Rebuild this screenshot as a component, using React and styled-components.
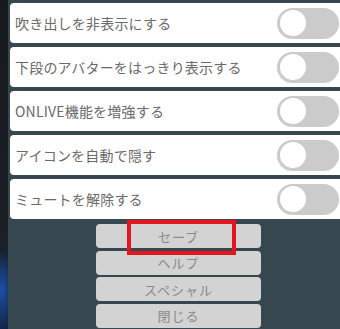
import React from 'react';
import styled, { createGlobalStyle } from 'styled-components';

const Global = createGlobalStyle`
  html, body {
    margin: 0;
    padding: 0;
    width: 340px;
    height: 329px;
    overflow: hidden;
    background: #37474f;
    font-family: "Noto Sans CJK JP", "Noto Sans", sans-serif;
  }
`;

const Screen = styled.div`
  display: flex;
  width: 340px;
  height: 329px;
`;

const Backdrop = styled.div`
  width: 8px;
  flex: none;
  background:
    radial-gradient(ellipse 14px 40px at 2px 290px, #1d4fa8 0%, rgba(20,50,120,0) 100%),
    linear-gradient(180deg, #161a1e 0%, #1a1f26 70%, #10244a 100%);
`;

const Panel = styled.div`
  flex: 1;
  display: flex;
  flex-direction: column;
  padding: 3px 0 0 2px;
  background: #37474f;
`;

const List = styled.div`
  display: flex;
  flex-direction: column;
  gap: 4px;
`;

const Row = styled.div`
  height: 40px;
  display: flex;
  align-items: center;
  justify-content: space-between;
  background: #fff;
  border-radius: 4px 0 0 4px;
  padding: 0 1px 0 5px;
`;

const Label = styled.span`
  font-size: 14px;
  color: #6a6a6a;
  letter-spacing: 0.2px;
`;

const Switch = styled.div`
  width: 62px;
  height: 31px;
  border-radius: 16px;
  background: #cbcbcb;
  display: flex;
  align-items: center;
  padding-left: 3px;
  box-sizing: border-box;
  &::after {
    content: '';
    width: 26px;
    height: 26px;
    border-radius: 50%;
    background: #fff;
  }
`;

const Buttons = styled.div`
  display: flex;
  flex-direction: column;
  gap: 2.6px;
  margin: 5px 0 0 86px;
  width: 165px;
`;

const Slot = styled.div`
  position: relative;
`;

const Button = styled.div`
  height: 24px;
  border-radius: 4px;
  background: #d3d3d3;
  color: #8a8a8a;
  font-size: 13px;
  display: flex;
  align-items: center;
  justify-content: center;
  letter-spacing: 1px;
`;

const Highlight = styled.div`
  position: absolute;
  left: 31px;
  top: -4px;
  width: 109px;
  height: 35px;
  box-sizing: border-box;
  border: 4px solid #e3161f;
`;

const options = [
  '吹き出しを非表示にする',
  '下段のアバターをはっきり表示する',
  'ONLIVE機能を増強する',
  'アイコンを自動で隠す',
  'ミュートを解除する',
];

export default function App() {
  return (
    <Screen>
      <Global />
      <Backdrop />
      <Panel>
        <List>
          {options.map((o) => (
            <Row key={o}>
              <Label>{o}</Label>
              <Switch />
            </Row>
          ))}
        </List>
        <Buttons>
          <Slot>
            <Button>セーブ</Button>
            <Highlight />
          </Slot>
          <Button>ヘルプ</Button>
          <Button>スペシャル</Button>
          <Button>閉じる</Button>
        </Buttons>
      </Panel>
    </Screen>
  );
}
